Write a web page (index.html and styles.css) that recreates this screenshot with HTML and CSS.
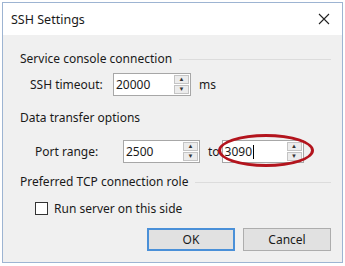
FILE: index.html
```html
<!DOCTYPE html>
<html lang="en">
  <head>
    <meta charset="UTF-8" />
    <title>SSH Settings</title>
    <link rel="stylesheet" href="styles.css">
  </head>
  <body>
    <div class="window">
      <div class="titlebar">
        <span class="title">SSH Settings</span>
        <svg class="close" width="12" height="12" viewBox="0 0 12 12">
          <path d="M1 1 L11 11 M11 1 L1 11" stroke="#222" stroke-width="1.1" fill="none" />
        </svg>
      </div>

      <div class="content">
        <div class="group-title with-line">Service console connection</div>
        <div class="row row-timeout">
          <span class="label label-timeout">SSH timeout:</span>
          <div class="spin spin-timeout">
            <span class="spin-value">20000</span>
            <div class="spin-buttons">
              <span class="spin-btn">&#9650;</span>
              <span class="spin-btn">&#9660;</span>
            </div>
          </div>
          <span class="unit">ms</span>
        </div>

        <div class="group-title group-data">Data transfer options</div>
        <div class="row row-port">
          <span class="label label-port">Port range:</span>
          <div class="spin spin-from">
            <span class="spin-value">2500</span>
            <div class="spin-buttons">
              <span class="spin-btn">&#9650;</span>
              <span class="spin-btn">&#9660;</span>
            </div>
          </div>
          <span class="to">to</span>
          <div class="spin spin-to">
            <span class="spin-value">3090<span class="caret"></span></span>
            <div class="spin-buttons">
              <span class="spin-btn">&#9650;</span>
              <span class="spin-btn">&#9660;</span>
            </div>
            <span class="highlight"></span>
          </div>
        </div>

        <div class="group-title with-line group-tcp">Preferred TCP connection role</div>
        <label class="check-row">
          <span class="checkbox"></span>
          <span>Run server on this side</span>
        </label>

        <div class="actions">
          <button class="btn btn-default">OK</button>
          <button class="btn">Cancel</button>
        </div>
      </div>
    </div>
  </body>
</html>
```

FILE: styles.css
```css
body {
  margin: 0;
  background: #ffffff;
  font-family: "Noto Sans", "Open Sans", sans-serif;
  font-size: 12px;
  color: #1a1a1a;
}
.window {
  margin: 2px 0 0 2px;
  width: 339px;
  height: 259px;
  border: 1px solid #9db4d2;
  background: #f0f0f0;
  display: flex;
  flex-direction: column;
}
.titlebar {
  height: 32px;
  background: #ffffff;
  display: flex;
  align-items: center;
  justify-content: space-between;
  padding: 0 12px 0 8px;
}
.title {
  font-size: 12.5px;
}
.content {
  padding: 16px 11px 0 17px;
}
.group-title {
  height: 16px;
  line-height: 16px;
  display: flex;
  align-items: center;
  white-space: nowrap;
}
.with-line::after {
  content: "";
  flex: 1;
  height: 1px;
  background: #dcdcdc;
  margin-left: 7px;
}
.row {
  display: flex;
  align-items: center;
}
.row-timeout {
  margin-top: 6px;
  padding-left: 10px;
}
.label-timeout {
  width: 83px;
}
.group-data {
  margin-top: 14px;
}
.row-port {
  margin-top: 14px;
  padding-left: 15px;
}
.label-port {
  width: 88px;
}
.spin {
  position: relative;
  height: 23px;
  box-sizing: border-box;
  border: 1px solid #a7a7a7;
  background: #ffffff;
  display: flex;
  align-items: center;
  justify-content: space-between;
  padding: 1px 1px 1px 2px;
}
.spin-timeout {
  width: 78px;
}
.spin-from {
  width: 77px;
}
.spin-to {
  width: 82px;
}
.spin-value {
  display: flex;
  align-items: center;
}
.caret {
  display: inline-block;
  width: 1px;
  height: 14px;
  background: #000;
  margin-left: 1px;
}
.spin-buttons {
  display: flex;
  flex-direction: column;
  gap: 1px;
  height: 19px;
}
.spin-btn {
  width: 15px;
  height: 9px;
  box-sizing: border-box;
  border: 1px solid #c4c4c4;
  background: #ececec;
  font-size: 6px;
  line-height: 7px;
  text-align: center;
  color: #333;
}
.unit {
  margin-left: 8px;
}
.to {
  margin: 0 2px 0 8px;
}
.highlight {
  position: absolute;
  left: -5px;
  top: -7px;
  width: 96px;
  height: 33px;
  box-sizing: border-box;
  border: 3px solid #b3141d;
  border-radius: 50%;
}
.group-tcp {
  margin-top: 11px;
}
.check-row {
  display: flex;
  align-items: center;
  margin: 10px 0 0 15px;
  gap: 6px;
}
.checkbox {
  width: 13px;
  height: 13px;
  box-sizing: border-box;
  border: 1px solid #333;
  background: #fff;
}
.actions {
  display: flex;
  justify-content: flex-end;
  gap: 8px;
  margin-top: 11px;
}
.btn {
  width: 88px;
  height: 23px;
  border: 1px solid #adadad;
  background: #e1e1e1;
  font-family: "Noto Sans", "Open Sans", sans-serif;
  font-size: 12px;
  color: #1a1a1a;
  padding: 0;
}
.btn-default {
  border: 2px solid #4a90d8;
}
```
